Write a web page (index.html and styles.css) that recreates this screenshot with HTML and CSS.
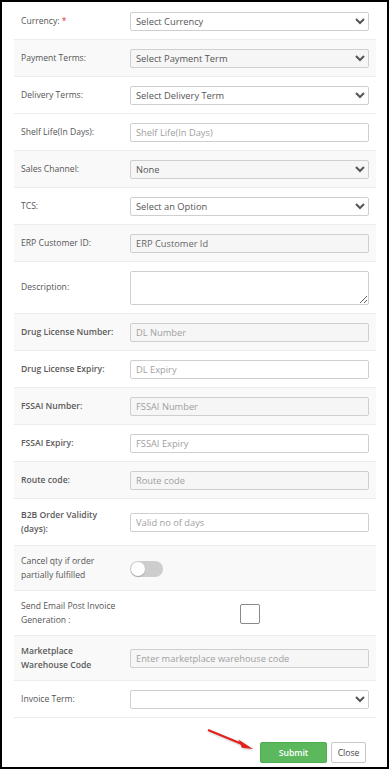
FILE: index.html
```html
<!DOCTYPE html>
<html lang="en">
<head>
    <meta charset="UTF-8">
    <title>Customer Settings</title>
    <link rel="stylesheet" href="styles.css">
</head>
<body>
<div class="modal">
    <div class="form">
        <div class="row first">
            <label class="lbl">Currency: <span class="req">*</span></label>
            <select class="ctl"><option>Select Currency</option></select>
        </div>
        <div class="row alt">
            <label class="lbl">Payment Terms:</label>
            <select class="ctl"><option>Select Payment Term</option></select>
        </div>
        <div class="row">
            <label class="lbl">Delivery Terms:</label>
            <select class="ctl"><option>Select Delivery Term</option></select>
        </div>
        <div class="row">
            <label class="lbl">Shelf Life(In Days):</label>
            <input class="ctl" type="text" placeholder="Shelf Life(In Days)">
        </div>
        <div class="row alt">
            <label class="lbl">Sales Channel:</label>
            <select class="ctl"><option>None</option></select>
        </div>
        <div class="row">
            <label class="lbl">TCS:</label>
            <select class="ctl"><option>Select an Option</option></select>
        </div>
        <div class="row alt">
            <label class="lbl">ERP Customer ID:</label>
            <input class="ctl dark" type="text" placeholder="ERP Customer Id">
        </div>
        <div class="row">
            <label class="lbl">Description:</label>
            <textarea class="ctl area"></textarea>
        </div>
        <div class="row alt">
            <label class="lbl strong">Drug License Number:</label>
            <input class="ctl" type="text" placeholder="DL Number">
        </div>
        <div class="row">
            <label class="lbl strong">Drug License Expiry:</label>
            <input class="ctl" type="text" placeholder="DL Expiry">
        </div>
        <div class="row alt">
            <label class="lbl strong">FSSAI Number:</label>
            <input class="ctl" type="text" placeholder="FSSAI Number">
        </div>
        <div class="row">
            <label class="lbl strong">FSSAI Expiry:</label>
            <input class="ctl" type="text" placeholder="FSSAI Expiry">
        </div>
        <div class="row alt">
            <label class="lbl strong">Route code:</label>
            <input class="ctl" type="text" placeholder="Route code">
        </div>
        <div class="row tall">
            <label class="lbl strong">B2B Order Validity (days):</label>
            <input class="ctl" type="text" placeholder="Valid no of days">
        </div>
        <div class="row alt">
            <label class="lbl">Cancel qty if order partially fulfilled</label>
            <span class="toggle"><span class="knob"></span></span>
        </div>
        <div class="row">
            <label class="lbl">Send Email Post Invoice Generation :</label>
            <span class="check"></span>
        </div>
        <div class="row alt">
            <label class="lbl strong">Marketplace Warehouse Code</label>
            <input class="ctl" type="text" placeholder="Enter marketplace warehouse code">
        </div>
        <div class="row last">
            <label class="lbl">Invoice Term:</label>
            <select class="ctl"><option></option></select>
        </div>
    </div>

    <div class="footer">
        <svg class="arrow" width="60" height="32" viewBox="0 0 60 32">
            <line x1="8" y1="8" x2="42" y2="22" stroke="#e3211c" stroke-width="2"/>
            <polygon points="53,27 38.3,17.4 41.9,25.8" fill="#e3211c"/>
        </svg>
        <button class="btn submit">Submit</button>
        <button class="btn close">Close</button>
    </div>
</div>
</body>
</html>
```

FILE: styles.css
```css
body {
    margin: 0;
    font-family: "Open Sans", "Liberation Sans", sans-serif;
    background: #fff;
}
.modal {
    width: 389px;
    height: 769px;
    box-sizing: border-box;
    border: 2px solid #000;
    padding: 0 11px 0 12px;
    display: flex;
    flex-direction: column;
}
.row {
    display: grid;
    grid-template-columns: 109px 1fr;
    align-items: center;
    padding: 9px 7px 8px;
    border-top: 1px solid #ececec;
}
.row.first {
    border-top: none;
    padding-top: 10px;
}
.row.tall {
    padding-top: 10px;
    padding-bottom: 9px;
}
.row.last {
    border-bottom: 1px solid #ececec;
}
.row.alt {
    background-color: #f9f9f9;
}
.lbl {
    font-size: 8.6px;
    line-height: 13.5px;
    color: #555;
    padding-right: 8px;
}
.lbl.strong {
    font-weight: 600;
    color: #5a5a5a;
}
.req {
    color: #e0313b;
}
.ctl {
    box-sizing: border-box;
    height: 19px;
    width: 100%;
    margin: 0;
    padding: 0 5px;
    border: 1px solid #cfcfcf;
    border-radius: 2px;
    background-color: #fff;
    font-family: "Open Sans", "Liberation Sans", sans-serif;
    font-size: 9.3px;
    color: #555;
}
select.ctl {
    padding-left: 1px;
}
.alt .ctl {
    background-color: #f6f6f6;
}
.ctl::placeholder {
    color: #a0a0a0;
}
.ctl.dark::placeholder {
    color: #666;
}
.ctl.area {
    height: 34px;
    resize: vertical;
}
.toggle {
    position: relative;
    width: 33px;
    height: 16px;
    border-radius: 8px;
    background-color: #cdcdcd;
}
.knob {
    position: absolute;
    left: 1px;
    top: 1px;
    width: 14px;
    height: 14px;
    border-radius: 50%;
    background-color: #fff;
    box-shadow: 0 1px 1px rgba(0, 0, 0, 0.2);
}
.check {
    justify-self: center;
    width: 20px;
    height: 20px;
    box-sizing: border-box;
    border: 1px solid #8a8a8a;
    border-radius: 2px;
    background-color: #fff;
}
.footer {
    position: relative;
    display: flex;
    justify-content: flex-end;
    gap: 4px;
    padding: 24px 10px 0 0;
}
.arrow {
    position: absolute;
    left: 186px;
    top: 4px;
    filter: drop-shadow(1px 1px 1px rgba(0, 0, 0, 0.25));
}
.btn {
    height: 21px;
    border-radius: 2px;
    font-family: "Open Sans", "Liberation Sans", sans-serif;
    font-size: 8.6px;
    padding: 0;
    cursor: pointer;
}
.btn.submit {
    width: 67px;
    background-color: #5cb85c;
    border: 1px solid #4cae4c;
    color: #fff;
    font-weight: 600;
}
.btn.close {
    width: 35px;
    background-color: #fff;
    border: 1px solid #c8c8c8;
    color: #444;
}
```
